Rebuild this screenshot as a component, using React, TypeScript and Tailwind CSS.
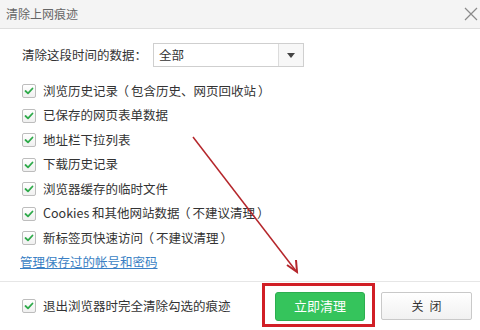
import React from "react";

const font = { fontFamily: '"Noto Sans CJK SC", "Noto Sans", sans-serif' };

function Check() {
  return (
    <span className="w-[14px] h-[14px] border border-[#bdbdbd] rounded-[2px] bg-gradient-to-b from-white to-[#f0f0f0] flex items-center justify-center shrink-0">
      <svg width="10" height="8" viewBox="0 0 10 8">
        <path d="M1.5 4 L4 6.3 L8.5 1.5" fill="none" stroke="#2eaa4a" strokeWidth="1.8" strokeLinecap="round" strokeLinejoin="round" />
      </svg>
    </span>
  );
}

function Txt({ t }: { t: string }) {
  const parts = t.split(/([（）、：])/);
  return (
    <span className="whitespace-nowrap">
      {parts.map((p, i) => {
        if (p === "（") return <span key={i} className="inline-block w-[13px] text-right -translate-x-[2px]">{p}</span>;
        if (p === "）") return <span key={i} className="inline-block w-[13px] text-left translate-x-[2px]">{p}</span>;
        if (p === "、" || p === "：") return <span key={i} className="inline-block w-[12.5px] text-left">{p}</span>;
        return <span key={i}>{p}</span>;
      })}
    </span>
  );
}

const items = [
  "浏览历史记录（包含历史、网页回收站）",
  "已保存的网页表单数据",
  "地址栏下拉列表",
  "下载历史记录",
  "浏览器缓存的临时文件",
  "Cookies 和其他网站数据（不建议清理）",
  "新标签页快速访问（不建议清理）",
];

export default function App() {
  return (
    <div className="w-[480px] h-[330px] bg-white relative overflow-hidden text-[12.5px] text-[#333]" style={font}>
      <div className="h-[29px] bg-[#f4f4f4] border-b border-[#dedede] flex items-center justify-between pl-[6px] pr-[2px]">
        <span className="text-[#666] text-[12px]">清除上网痕迹</span>
        <svg width="14" height="14" viewBox="0 0 14 14">
          <path d="M1 1 L13 13 M13 1 L1 13" stroke="#8a8a8a" strokeWidth="1.2" />
        </svg>
      </div>
      <div className="pl-[22px] pt-[14px]">
        <div className="flex items-center h-[24px]">
          <span className="w-[131px]"><Txt t="清除这段时间的数据：" /></span>
          <div className="w-[151px] h-[24px] border border-[#cfcfcf] flex">
            <div className="flex-1 flex items-center pl-[5px]">全部</div>
            <div className="w-[25px] border-l border-[#dcdcdc] bg-[#f7f7f7] flex items-center justify-center">
              <svg width="8" height="5" viewBox="0 0 8 5"><path d="M0 0 H8 L4 5 Z" fill="#444" /></svg>
            </div>
          </div>
        </div>
        <div className="mt-[12px] flex flex-col">
          {items.map((t) => (
            <div key={t} className="h-[24.5px] flex items-center gap-[7px]">
              <Check />
              <span className="text-[#333]"><Txt t={t} /></span>
            </div>
          ))}
          <div className="h-[24.5px] flex items-center -ml-[2px]">
            <span className="text-[#3a7fc4] underline">管理保存过的帐号和密码</span>
          </div>
        </div>
      </div>
      <div className="absolute left-0 right-0 top-[281px] h-[49px] border-t border-[#e6e6e6] flex items-center pl-[22px] pr-[8px]">
        <div className="flex items-center gap-[7px] flex-1">
          <Check />
          <span className="whitespace-nowrap">退出浏览器时完全清除勾选的痕迹</span>
        </div>
        <button className="w-[90px] h-[29px] rounded-[3px] bg-[#35c45c] border border-[#2cae50] text-white text-[13px] mr-[16px]">立即清理</button>
        <button className="w-[91px] h-[28px] rounded-[2px] bg-gradient-to-b from-white to-[#f1f1f1] border border-[#c9c9c9] text-[#333] text-[12px] tracking-[6px] pl-[6px]">关闭</button>
      </div>
      <div className="absolute left-[262px] top-[283px] w-[113px] h-[44px] border-[3px] border-[#d11f26]" />
      <svg className="absolute left-0 top-0" width="480" height="330" viewBox="0 0 480 330">
        <line x1="193" y1="137" x2="296" y2="271" stroke="#b5262b" strokeWidth="1.5" />
        <path d="M287 265 L297 272 L296 260" fill="none" stroke="#b5262b" strokeWidth="2" />
      </svg>
    </div>
  );
}
